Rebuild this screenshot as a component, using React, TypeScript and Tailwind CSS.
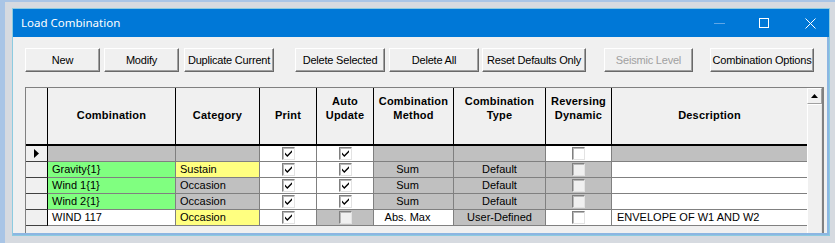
import React from "react";

type Check = "on" | "off" | "dis";
type Cell = { text?: string; bg: string; check?: Check };

const COLS = [
  { w: "w-[128px]", label: ["Combination"], align: "justify-start pl-[4px]" },
  { w: "w-[84px]", label: ["Category"], align: "justify-start pl-[4px]" },
  { w: "w-[57px]", label: ["Print"], align: "justify-center" },
  { w: "w-[57px]", label: ["Auto", "Update"], align: "justify-center" },
  { w: "w-[80px]", label: ["Combination", "Method"], align: "justify-center pr-[12px]" },
  { w: "w-[92px]", label: ["Combination", "Type"], align: "justify-center" },
  { w: "w-[66px]", label: ["Reversing", "Dynamic"], align: "justify-center" },
  { w: "w-[195px]", label: ["Description"], align: "justify-start pl-[5px]" },
];

const GREY = "bg-[#c0c0c0]";
const WHITE = "bg-white";
const GREEN = "bg-[#80ff80]";
const YELLOW = "bg-[#ffff80]";

const ROWS: Cell[][] = [
  [
    { bg: GREY },
    { bg: GREY },
    { bg: WHITE, check: "on" },
    { bg: WHITE, check: "on" },
    { bg: GREY },
    { bg: GREY },
    { bg: WHITE, check: "off" },
    { bg: GREY },
  ],
  [
    { bg: GREEN, text: "Gravity{1}" },
    { bg: YELLOW, text: "Sustain" },
    { bg: WHITE, check: "on" },
    { bg: WHITE, check: "on" },
    { bg: GREY, text: "Sum" },
    { bg: GREY, text: "Default" },
    { bg: GREY, check: "dis" },
    { bg: WHITE },
  ],
  [
    { bg: GREEN, text: "Wind 1{1}" },
    { bg: GREY, text: "Occasion" },
    { bg: WHITE, check: "on" },
    { bg: WHITE, check: "on" },
    { bg: GREY, text: "Sum" },
    { bg: GREY, text: "Default" },
    { bg: GREY, check: "dis" },
    { bg: WHITE },
  ],
  [
    { bg: GREEN, text: "Wind 2{1}" },
    { bg: GREY, text: "Occasion" },
    { bg: WHITE, check: "on" },
    { bg: WHITE, check: "on" },
    { bg: GREY, text: "Sum" },
    { bg: GREY, text: "Default" },
    { bg: GREY, check: "dis" },
    { bg: WHITE },
  ],
  [
    { bg: WHITE, text: "WIND 117" },
    { bg: YELLOW, text: "Occasion" },
    { bg: WHITE, check: "on" },
    { bg: GREY, check: "dis" },
    { bg: WHITE, text: "Abs. Max" },
    { bg: GREY, text: "User-Defined" },
    { bg: WHITE, check: "off" },
    { bg: WHITE, text: "ENVELOPE OF W1 AND W2" },
  ],
];

const BUTTONS = [
  { label: "New", cls: "ml-[12px] w-[75px]" },
  { label: "Modify", cls: "ml-[4px] w-[75px]" },
  { label: "Duplicate Current", cls: "ml-[5px] w-[90px]" },
  { label: "Delete Selected", cls: "ml-[21px] w-[90px]" },
  { label: "Delete All", cls: "ml-[4px] w-[90px]" },
  { label: "Reset Defaults Only", cls: "ml-[3px] w-[104px]" },
  { label: "Seismic Level", cls: "ml-[18px] w-[89px]", disabled: true },
  { label: "Combination Options", cls: "ml-[17px] w-[104px]" },
];

function CheckBox({ state }: { state: Check }) {
  return (
    <div
      className={`flex size-[13px] items-center justify-center border-t border-l border-r border-b border-t-[#808080] border-l-[#808080] border-r-[#e3e3e3] border-b-[#e3e3e3] shadow-[inset_1px_1px_0_#b8b8b8] ${
        state === "dis" ? "bg-[#f0f0f0]" : "bg-white"
      }`}
    >
      {state === "on" && (
        <svg width="9" height="9" viewBox="0 0 9 9">
          <path d="M1 3.5 L3.3 6 L8 1.2 L8 3.2 L3.3 8 L1 5.5 Z" fill="#000" />
        </svg>
      )}
    </div>
  );
}

export default function App() {
  return (
    <div className="h-[243px] w-[835px] overflow-hidden border-l-[5px] border-t-[2px] border-[#a9c5e6] bg-[#d6dae0] pl-[7px] pt-[6px] font-['Liberation_Sans',Arial,sans-serif] text-[11px] text-black">
      {/* Window */}
      <div className="flex h-[228px] w-[818px] flex-col border border-[#8ccbe0]">
        {/* Title bar */}
        <div className="flex h-[28px] shrink-0 items-center bg-[#0078d7] pl-[8px] pr-[13px] text-white">
          <span className="font-['Noto_Sans',sans-serif] text-[11.5px]">Load Combination</span>
          <div className="ml-auto flex items-center">
            <div className="h-px w-[11px] bg-[#5fa6e6]" />
            <div className="ml-[34px] size-[10px] border border-white" />
            <svg className="ml-[36px]" width="11" height="11" viewBox="0 0 11 11">
              <path d="M0.5 0.5 L10.5 10.5 M10.5 0.5 L0.5 10.5" stroke="#fff" strokeWidth="1" />
            </svg>
          </div>
        </div>

        {/* Content */}
        <div className="flex-1 overflow-hidden border-r-2 border-b-2 border-[#8cb6e2] bg-[#f0f0f0]">
          {/* Buttons */}
          <div className="mt-[11px] flex h-[24px]">
            {BUTTONS.map((b) => (
              <div
                key={b.label}
                className={`${b.cls} flex h-[24px] shrink-0 items-center justify-center whitespace-nowrap border-t border-l border-r border-b border-t-white border-l-white border-r-[#696969] border-b-[#696969] bg-[#f0f0f0] tracking-[-0.2px] shadow-[inset_-1px_-1px_0_#a0a0a0] ${
                  b.disabled ? "text-[#a0a0a0]" : "text-black"
                }`}
              >
                {b.label}
              </div>
            ))}
          </div>

          {/* Grid */}
          <div className="ml-[12px] mt-[15px] flex h-[170px] w-[799px] border-t border-l border-r-2 border-[#808080]">
            <div className="flex w-[781px] flex-col">
              {/* Header */}
              <div className="flex h-[58px] border-b-2 border-black">
                <div className="w-[22px] border-r border-black" />
                {COLS.map((c, i) => (
                  <div
                    key={i}
                    className={`${c.w} flex flex-col items-center justify-end pb-[22px] text-[11px] font-bold leading-[14px] tracking-[0.2px] ${
                      i < COLS.length - 1 ? "border-r border-black" : ""
                    }`}
                  >
                    {c.label.map((l) => (
                      <span key={l}>{l}</span>
                    ))}
                  </div>
                ))}
              </div>

              {/* Rows */}
              {ROWS.map((row, r) => (
                <div key={r} className="flex h-[16px]">
                  <div className="flex w-[22px] items-center justify-center border-r border-b border-r-black border-b-[#404040]">
                    {r === 0 && (
                      <svg width="5" height="9" viewBox="0 0 5 9">
                        <path d="M0 0 L5 4.5 L0 9 Z" fill="#000" />
                      </svg>
                    )}
                  </div>
                  {row.map((cell, i) => (
                    <div
                      key={i}
                      className={`${COLS[i].w} ${cell.bg} ${COLS[i].align} flex items-center overflow-hidden whitespace-nowrap border-b border-[#808080] leading-[15px] ${
                        i < COLS.length - 1 ? "border-r" : ""
                      }`}
                    >
                      {cell.check ? <CheckBox state={cell.check} /> : cell.text}
                    </div>
                  ))}
                </div>
              ))}
            </div>

            {/* Scrollbar */}
            <div className="flex w-[15px] flex-col bg-[#f0f0f0]">
              <div className="flex h-[16px] items-center justify-center border-t border-l border-r border-b border-t-white border-l-white border-r-[#a0a0a0] border-b-[#a0a0a0]">
                <svg width="7" height="4" viewBox="0 0 7 4">
                  <path d="M3.5 0 L7 4 L0 4 Z" fill="#000" />
                </svg>
              </div>
              <div className="flex-1 border-l border-t border-r border-t-white border-l-white border-r-[#e3e3e3]" />
            </div>
          </div>
        </div>
      </div>
    </div>
  );
}
